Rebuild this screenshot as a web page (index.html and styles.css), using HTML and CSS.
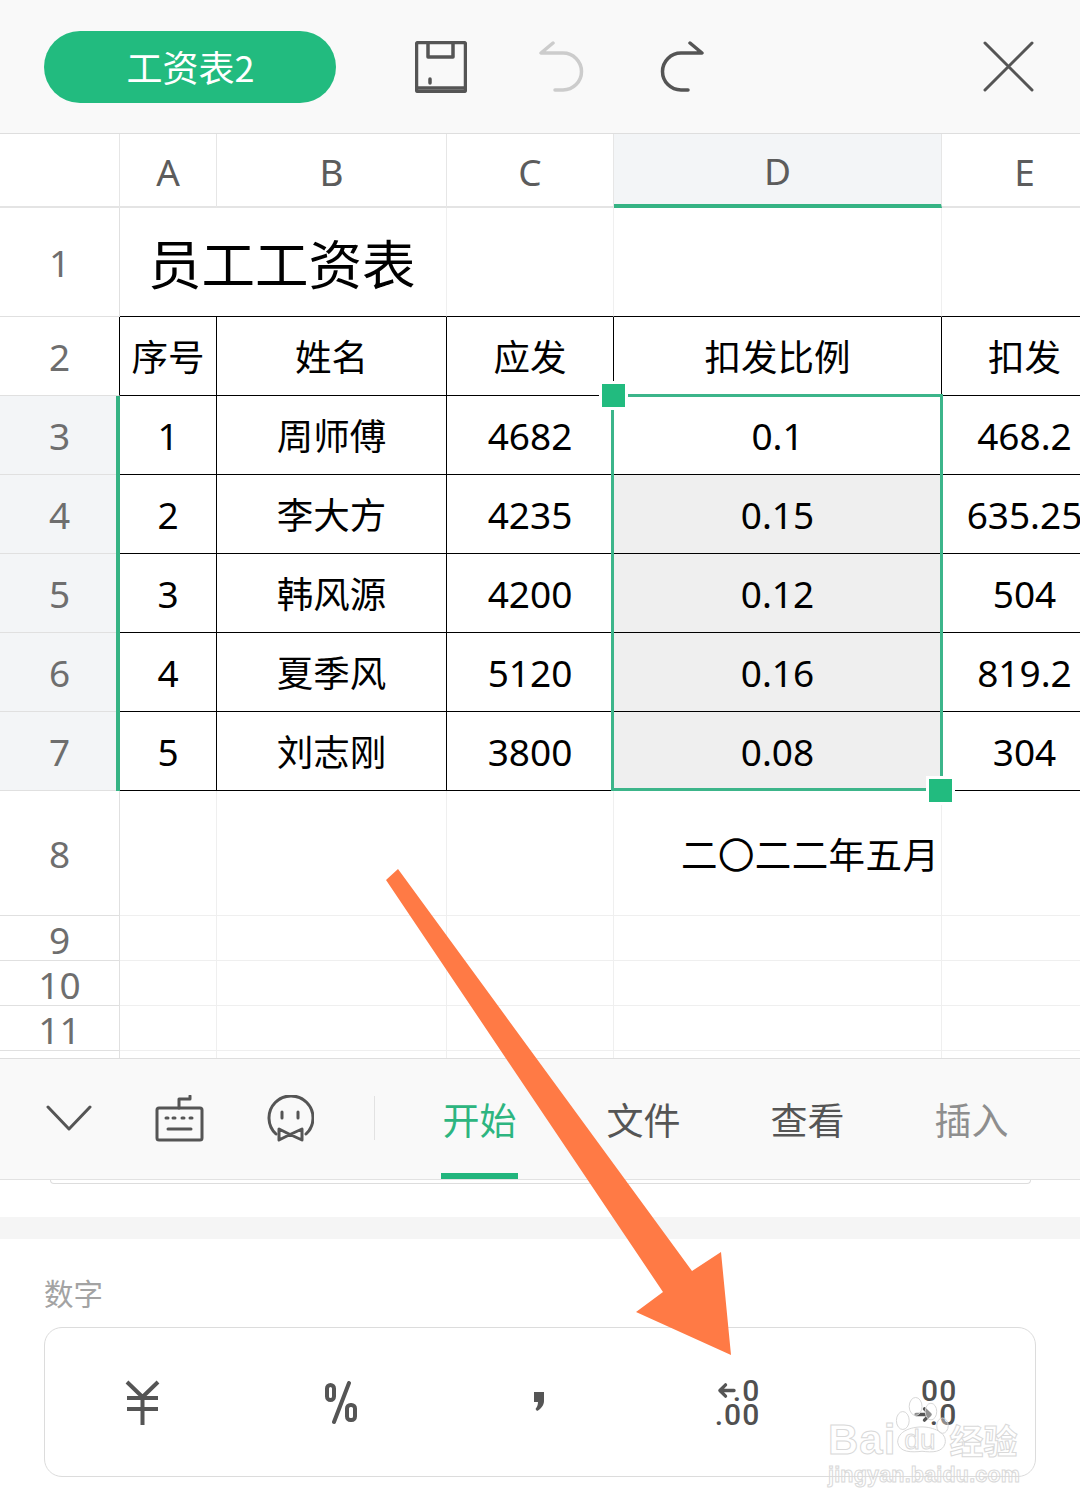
FILE: index.html
```html
<!DOCTYPE html>
<html lang="zh-CN">
<head>
<meta charset="utf-8">
<title>工资表2</title>
<link rel="stylesheet" href="styles.css">
</head>
<body>
<div class="page">
  <header class="topbar">
    <div class="pill">工资表2</div>
    <svg class="ico ico-save" viewBox="415 41 52 52"><rect x="416.5" y="42.5" width="49" height="49" rx="2"/><path d="M428 43V57H453V43"/><path d="M430 79V83"/><path d="M417 88H465"/></svg>
    <svg class="ico ico-undo" viewBox="538 41 48 52"><path d="M553 43L541 53H563A18.5 18.5 0 0 1 563 90H555"/></svg>
    <svg class="ico ico-redo" viewBox="659 41 48 52"><path d="M692 43L704 53H683A18.5 18.5 0 0 0 683 90H690"/></svg>
    <svg class="ico ico-close" viewBox="982 41 53 52"><path d="M985 43L1032 90M1032 43L985 90"/></svg>
  </header>

  <main class="sheet">
    <div class="corner"></div>
    <div class="ch">A</div>
    <div class="ch">B</div>
    <div class="ch">C</div>
    <div class="ch ch-active">D</div>
    <div class="ch">E</div>

    <div class="rh">1</div>
    <div class="c under title">员工工资表</div>
    <div class="c under"></div>
    <div class="c under"></div>
    <div class="c under"></div>

    <div class="rh rh-edge">2</div>
    <div class="c k t">序号</div><div class="c k t">姓名</div><div class="c k t">应发</div><div class="c k t">扣发比例</div><div class="c k t">扣发</div>

    <div class="rh rh-sel">3</div>
    <div class="c k n">1</div><div class="c k t">周师傅</div><div class="c k n">4682</div><div class="c k n">0.1</div><div class="c k n">468.2</div>

    <div class="rh rh-sel">4</div>
    <div class="c k n">2</div><div class="c k t">李大方</div><div class="c k n">4235</div><div class="c k n shade">0.15</div><div class="c k n">635.25</div>

    <div class="rh rh-sel">5</div>
    <div class="c k n">3</div><div class="c k t">韩风源</div><div class="c k n">4200</div><div class="c k n shade">0.12</div><div class="c k n">504</div>

    <div class="rh rh-sel">6</div>
    <div class="c k n">4</div><div class="c k t">夏季风</div><div class="c k n">5120</div><div class="c k n shade">0.16</div><div class="c k n">819.2</div>

    <div class="rh rh-sel">7</div>
    <div class="c k n">5</div><div class="c k t">刘志刚</div><div class="c k n">3800</div><div class="c k n shade">0.08</div><div class="c k n">304</div>

    <div class="rh">8</div>
    <div class="c"></div><div class="c"></div><div class="c"></div><div class="c date">二〇二二年五月</div><div class="c"></div>

    <div class="rh rh-low">9</div>
    <div class="c"></div><div class="c"></div><div class="c"></div><div class="c"></div><div class="c"></div>
    <div class="rh rh-low">10</div>
    <div class="c"></div><div class="c"></div><div class="c"></div><div class="c"></div><div class="c"></div>
    <div class="rh rh-low">11</div>
    <div class="c"></div><div class="c"></div><div class="c"></div><div class="c"></div><div class="c"></div>
    <div class="rh"></div>
    <div class="c"></div><div class="c"></div><div class="c"></div><div class="c"></div><div class="c"></div>

    <div class="selection"></div>
    <div class="rowbar"></div>
    <div class="handle handle-a"></div>
    <div class="handle handle-b"></div>
  </main>

  <nav class="tabbar">
    <svg class="ico ico-chev" viewBox="46 1105 46 28"><path d="M48 1108L69 1130L90 1108"/></svg>
    <svg class="ico ico-kbd" viewBox="155 1096 49 47"><rect x="157" y="1109" width="45" height="32" rx="2"/><path d="M179 1109V1100H190V1097"/><path class="dots" d="M166 1119H168M173 1119H175M182 1119H184M190 1119H192"/><path d="M168 1130H191"/></svg>
    <svg class="ico ico-face" viewBox="266 1096 48 47"><path d="M276 1135A22 22 0 1 1 306 1135"/><path d="M282 1113V1119M298 1113V1119"/><path d="M279 1130L290 1135.500L302 1130V1141L290 1135.500L279 1141Z"/></svg>
    <span class="tab-div"></span>
    <div class="tabs">
      <div class="tab tab-on">开始</div>
      <div class="tab">文件</div>
      <div class="tab">查看</div>
      <div class="tab tab-off">插入</div>
    </div>
  </nav>

  <section class="panel">
    <div class="peek"></div>
    <div class="strip"></div>
    <div class="label">数字</div>
    <div class="card">
      <div class="slot">
        <svg class="ico ico-yen" viewBox="124 1380 37 46"><path d="M127 1382L142.500 1397L158 1382M127 1398H158M127 1409H158M142.500 1397V1425"/></svg>
      </div>
      <div class="slot">
        <svg class="ico ico-pct" viewBox="324 1380 35 44"><rect x="327" y="1384" width="7" height="15" rx="3.500"/><rect x="347" y="1404" width="8" height="15" rx="3.500"/><path d="M349 1382L334 1421"/></svg>
      </div>
      <div class="slot">
        <svg class="ico-comma" viewBox="532 1392 14 22"><path d="M534 1393H544V1402C544 1406 541 1410 537 1412L535.500 1410C537 1408 538 1406 538 1403H534Z"/></svg>
      </div>
      <div class="slot">
        <div class="dec">
          <div class="dec-row"><svg class="ico ico-arr" viewBox="0 0 20 18"><path d="M18 9H3M9 3L3 9L9 15"/></svg><span class="dec-txt">.0</span></div>
          <div class="dec-row"><span class="dec-txt">.00</span></div>
        </div>
      </div>
      <div class="slot">
        <div class="dec">
          <div class="dec-row"><span class="dec-txt">00</span></div>
          <div class="dec-row"><svg class="ico ico-arr" viewBox="0 0 20 18"><path d="M2 9H17M11 3L17 9L11 15"/></svg><span class="dec-txt">.0</span></div>
        </div>
      </div>
    </div>
  </section>

  <svg class="arrow" viewBox="0 0 1080 1509"><polygon points="398,869 692,1271 721,1252 731,1355 636,1312 663,1292 386,880"/></svg>

  <div class="mark">
    <svg class="mark-paw" viewBox="0 0 100 90"><ellipse cx="20" cy="38" rx="10" ry="14"/><ellipse cx="40" cy="16" rx="10" ry="14"/><ellipse cx="64" cy="24" rx="9" ry="13"/><ellipse cx="82" cy="46" rx="9" ry="12"/><path d="M12 72C12 54 34 48 50 48C66 48 90 56 86 74C82 88 66 88 50 86C34 88 14 88 12 72Z"/></svg>
    <div class="mark-top"><span class="mark-bai">Bai</span><span class="mark-du">du</span><span class="mark-cn">经验</span></div>
    <div class="mark-url">jingyan.baidu.com</div>
  </div>
</div>
</body>
</html>
```

FILE: styles.css
```css
* { box-sizing: border-box; }
html, body { margin: 0; padding: 0; background: #fff; }
body { font-family: "Noto Sans", "Noto Sans CJK SC", sans-serif; }
.page { position: relative; width: 1080px; height: 1509px; overflow: hidden; }

.ico { display: block; fill: none; stroke: #555; stroke-width: 3; stroke-linecap: round; stroke-linejoin: round; flex: none; }

.topbar { height: 134px; background: #f9f9f9; border-bottom: 1px solid #dedede; display: flex; align-items: center; padding: 0 45px 0 44px; }
.pill { width: 292px; height: 72px; border-radius: 36px; background: #22bb7f; color: #fff; font: 36px/70px "Noto Sans CJK SC", sans-serif; text-align: center; padding-left: 1px; margin-top: 1px; }
.ico-save { width: 52px; height: 52px; margin-left: 79px; margin-top: 1px; stroke-width: 3.500; }
.ico-undo { width: 48px; height: 52px; margin-left: 71px; margin-top: 1px; stroke: #ccc; stroke-width: 3.500; }
.ico-redo { width: 48px; height: 52px; margin-left: 71px; margin-top: 1px; stroke-width: 3.500; }
.ico-close { width: 53px; height: 52px; margin-left: auto; margin-top: 1px; }

.sheet { position: relative; height: 925px; overflow: hidden; display: grid; grid-template-columns: 120px 97px 230px 167px 328px 166px; grid-template-rows: 74px 109px 79px 79px 79px 79px 79px 79px 125px 45px 45px 45px 9px; border-left: 1px solid #eee; margin-left: -1px; color: #000; font-size: 36px; }
.corner, .ch { border-right: 1px solid #e6e6e6; border-bottom: 2px solid #e4e4e4; }
.ch { color: #5c5c5c; display: flex; align-items: center; justify-content: center; padding-top: 2px; font-size: 37px; }
.ch-active { background: #f3f5f7; border-bottom: 4px solid #35b384; }
.rh { color: #6e6e6e; border-right: 1px solid #e0e0e0; border-bottom: 1px solid #e0e0e0; display: flex; align-items: center; justify-content: center; font-size: 37px; }
.rh-edge { border-right-color: #000; }
.rh-sel { background: #f3f5f7; }
.rh-low { padding-top: 3px; line-height: 40px; }
.c { display: flex; align-items: center; justify-content: center; border-right: 1px solid #efefef; border-bottom: 1px solid #efefef; white-space: nowrap; min-width: 0; }
.k { border-right-color: #000; border-bottom-color: #000; }
.t { font: 36.500px/1 "Noto Sans CJK SC", sans-serif; }
.n { font-size: 37px; }
.under { border-bottom-color: #000; }
.title { grid-column: span 2; justify-content: flex-start; padding-left: 28px; font: 53.500px/1 "Noto Sans CJK SC", sans-serif; }
.shade { background: #efefef; }
.date { justify-content: flex-start; padding-left: 67px; padding-top: 2px; font: 36.500px/1 "Noto Sans CJK SC", sans-serif; letter-spacing: .4px; overflow: visible; }

.selection { position: absolute; left: 611px; top: 260px; width: 332px; height: 397px; border: 3px solid #3cb58a; }
.rowbar { position: absolute; left: 116px; top: 262px; width: 4px; height: 395px; background: #35b384; }
.handle { position: absolute; width: 23px; height: 23px; background: #22bb7f; box-shadow: 0 0 0 3px #fff; }
.handle-a { left: 602px; top: 250px; }
.handle-b { left: 929px; top: 645px; }

.tabbar { height: 122px; background: #f9f9f9; border-top: 1px solid #dedede; border-bottom: 1px solid #e2e2e2; display: flex; align-items: center; position: relative; z-index: 1; margin-top: -1px; padding-left: 46px; }
.ico-chev { width: 46px; height: 28px; margin-top: -2px; }
.ico-kbd { width: 49px; height: 47px; margin-left: 63px; margin-top: -1px; }
.ico-kbd .dots { stroke-width: 3; }
.ico-face { width: 48px; height: 47px; margin-left: 62px; margin-top: -1px; }
.tab-div { width: 1px; height: 44px; background: #e2e2e2; margin-left: 60px; margin-top: -2px; }
.tabs { display: flex; align-items: stretch; height: 100%; margin-left: 66px; gap: 87px; }
.tab { width: 77px; text-align: center; font: 37px/120px "Noto Sans CJK SC", sans-serif; color: #555; border-bottom: 6px solid transparent; white-space: nowrap; }
.tab-on { color: #2db580; border-bottom-color: #22b57d; }
.tab-off { color: #8e8e8e; }

.panel { position: relative; height: 329px; padding: 37px 44px 0; }
.peek { position: absolute; left: 50px; right: 49px; top: 0; height: 4px; border: 1px solid #ddd; border-top: 0; border-radius: 0 0 10px 10px; }
.strip { height: 22px; background: #f5f5f5; margin: 0 -44px; }
.label { margin-top: 33px; font: 29.500px/40px "Noto Sans CJK SC", sans-serif; color: #a3a3a3; }
.card { margin-top: 15px; height: 150px; border: 1px solid #dcdcdc; border-radius: 18px; display: grid; grid-template-columns: repeat(5, 1fr); }
.slot { display: flex; align-items: center; justify-content: center; }
.ico-yen { width: 37px; height: 46px; stroke-width: 4; stroke-linecap: butt; margin-top: 1px; margin-left: -3px; }
.ico-pct { width: 35px; height: 44px; stroke-width: 4; margin-top: 1px; margin-left: -1px; }
.ico-comma { display: block; width: 14px; height: 22px; fill: #555; margin-left: -2px; }
.dec { display: flex; flex-direction: column; align-items: flex-end; color: #505050; margin-top: 1px; margin-left: -2px; }
.dec-row { display: flex; align-items: center; height: 23.500px; }
.dec-txt { font: 500 30px/23px Roboto, sans-serif; letter-spacing: 1px; margin-right: -1px; }
.ico-arr { width: 19px; height: 17px; stroke-width: 3.500; margin-right: -3px; }

.arrow { position: absolute; inset: 0; width: 1080px; height: 1509px; z-index: 2; fill: #ff7a45; pointer-events: none; }

.mark { position: absolute; left: 828px; top: 1392px; width: 196px; height: 96px; z-index: 3; color: transparent; -webkit-text-stroke: 1px #d9d9d9; }
.mark-paw { position: absolute; left: 62px; top: 0; width: 64px; height: 66px; fill: rgba(255,255,255,.35); stroke: #d5d5d5; stroke-width: 1.500; }
.mark-top { position: absolute; left: 0; top: 26px; display: flex; align-items: center; white-space: nowrap; }
.mark-bai { font: 700 42px/44px "Liberation Sans", sans-serif; letter-spacing: 1px; }
.mark-du { font: 400 28px/44px "Liberation Sans", sans-serif; margin-left: 8px; }
.mark-cn { font: 700 34px/44px "Noto Sans CJK SC", sans-serif; margin-left: 14px; }
.mark-url { position: absolute; left: 0; top: 70px; font: 700 21.500px/26px "Liberation Sans", sans-serif; white-space: nowrap; letter-spacing: .2px; }
```
